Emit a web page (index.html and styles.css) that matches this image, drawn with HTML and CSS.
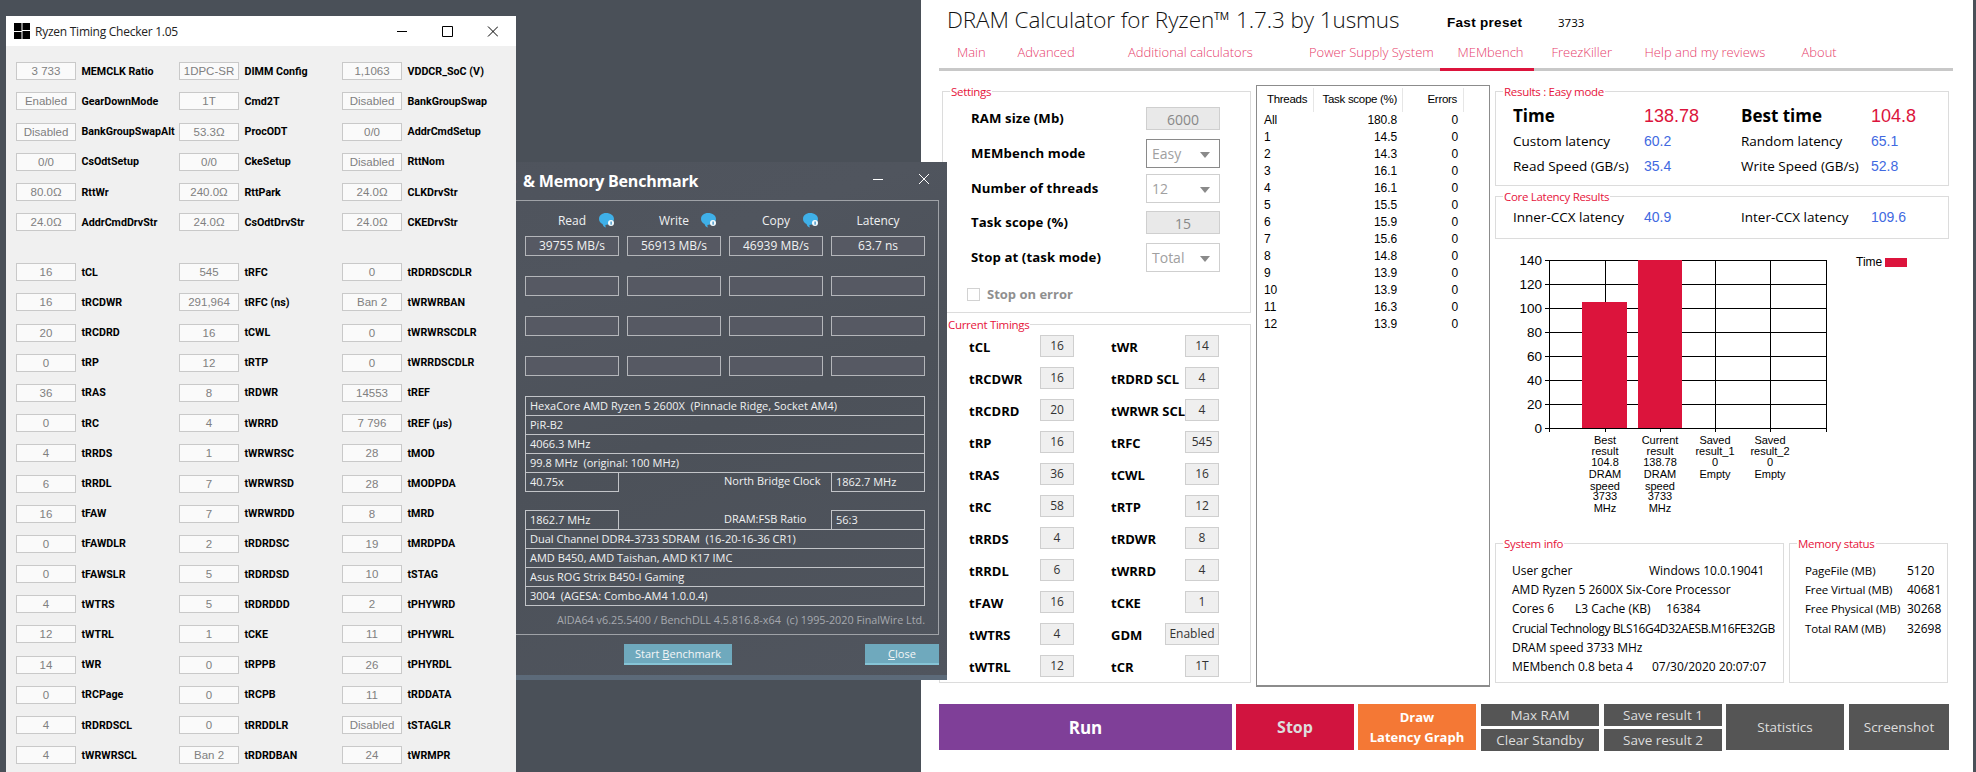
FILE: index.html
```html
<!DOCTYPE html>
<html lang="en">
<head>
<meta charset="utf-8">
<title>Ryzen tools</title>
<link rel="stylesheet" href="styles.css">
</head>
<body>
<div class="desktop">

<section class="dram">
  <header class="dram-head">
    <h1>DRAM Calculator for Ryzen™ 1.7.3 by 1usmus</h1>
    <span class="preset">Fast preset</span>
    <span class="preset-val">3733</span>
  </header>
  <nav class="tabs">
    <span>Main</span><span>Advanced</span><span>Additional calculators</span><span>Power Supply System</span><span class="on">MEMbench</span><span>FreezKiller</span><span>Help and my reviews</span><span>About</span>
  </nav>
  <div class="main">
    <div class="left">
      <div class="group settings">
        <span class="legend">Settings</span>
        <div class="srow"><b>RAM size (Mb)</b><span class="input">6000</span></div>
        <div class="srow g9"><b>MEMbench mode</b><span class="select focus">Easy<i></i></span></div>
        <div class="srow g6"><b>Number of threads</b><span class="select">12<i></i></span></div>
        <div class="srow g8"><b>Task scope (%)</b><span class="input">15</span></div>
        <div class="srow g9"><b>Stop at (task mode)</b><span class="select">Total<i></i></span></div>
        <div class="check"><i></i><b>Stop on error</b></div>
      </div>
      <div class="group timings">
        <span class="legend">Current Timings</span>
        <b>tCL</b><span class="tv">16</span><b>tWR</b><span class="tv">14</span>
        <b>tRCDWR</b><span class="tv">16</span><b>tRDRD SCL</b><span class="tv">4</span>
        <b>tRCDRD</b><span class="tv">20</span><b>tWRWR SCL</b><span class="tv">4</span>
        <b>tRP</b><span class="tv">16</span><b>tRFC</b><span class="tv">545</span>
        <b>tRAS</b><span class="tv">36</span><b>tCWL</b><span class="tv">16</span>
        <b>tRC</b><span class="tv">58</span><b>tRTP</b><span class="tv">12</span>
        <b>tRRDS</b><span class="tv">4</span><b>tRDWR</b><span class="tv">8</span>
        <b>tRRDL</b><span class="tv">6</span><b>tWRRD</b><span class="tv">4</span>
        <b>tFAW</b><span class="tv">16</span><b>tCKE</b><span class="tv">1</span>
        <b>tWTRS</b><span class="tv">4</span><b>GDM</b><span class="tv wide">Enabled</span>
        <b>tWTRL</b><span class="tv">12</span><b>tCR</b><span class="tv">1T</span>
      </div>
    </div>

    <div class="threads">
      <div class="thead"><span>Threads</span><span>Task scope (%)</span><span>Errors</span></div>
      <div class="trow"><span>All</span><span>180.8</span><span>0</span></div>
      <div class="trow"><span>1</span><span>14.5</span><span>0</span></div>
      <div class="trow"><span>2</span><span>14.3</span><span>0</span></div>
      <div class="trow"><span>3</span><span>16.1</span><span>0</span></div>
      <div class="trow"><span>4</span><span>16.1</span><span>0</span></div>
      <div class="trow"><span>5</span><span>15.5</span><span>0</span></div>
      <div class="trow"><span>6</span><span>15.9</span><span>0</span></div>
      <div class="trow"><span>7</span><span>15.6</span><span>0</span></div>
      <div class="trow"><span>8</span><span>14.8</span><span>0</span></div>
      <div class="trow"><span>9</span><span>13.9</span><span>0</span></div>
      <div class="trow"><span>10</span><span>13.9</span><span>0</span></div>
      <div class="trow"><span>11</span><span>16.3</span><span>0</span></div>
      <div class="trow"><span>12</span><span>13.9</span><span>0</span></div>
    </div>

    <div class="right">
      <div class="group results">
        <span class="legend">Results : Easy mode</span>
        <b class="big">Time</b><span class="bigval">138.78</span><b class="big">Best time</b><span class="bigval">104.8</span>
        <span>Custom latency</span><span class="blue">60.2</span><span>Random latency</span><span class="blue">65.1</span>
        <span>Read Speed (GB/s)</span><span class="blue">35.4</span><span>Write Speed (GB/s)</span><span class="blue">52.8</span>
      </div>
      <div class="group core">
        <span class="legend">Core Latency Results</span>
        <span>Inner-CCX latency</span><span class="blue">40.9</span><span>Inter-CCX latency</span><span class="blue">109.6</span>
      </div>
      <svg class="chart" width="454" height="304" viewBox="0 0 454 304">
        <g class="grid">
          <path d="M50 21.5H332M50 45.5H332M50 69.5H332M50 93.5H332M50 117.5H332M50 141.5H332M50 165.5H332M50 189.5H332"/>
          <path d="M54.5 21V193M110.5 21V193M165.5 21V193M220.5 21V193M275.5 21V193M331.5 21V193"/>
        </g>
        <rect class="bar" x="87" y="63" width="45" height="126"/>
        <rect class="bar" x="143" y="21" width="44" height="168"/>
        <g class="ylab">
          <text x="47" y="26">140</text><text x="47" y="50">120</text><text x="47" y="74">100</text><text x="47" y="98">80</text><text x="47" y="122">60</text><text x="47" y="146">40</text><text x="47" y="170">20</text><text x="47" y="194">0</text>
        </g>
        <text class="lgd" x="361" y="27">Time</text>
        <rect class="bar" x="390" y="19" width="22" height="9"/>
        <g class="xlab">
          <text x="110" y="205">Best</text><text x="110" y="216">result</text><text x="110" y="227">104.8</text><text x="110" y="239">DRAM</text><text x="110" y="251">speed</text><text x="110" y="261">3733</text><text x="110" y="273">MHz</text>
          <text x="165" y="205">Current</text><text x="165" y="216">result</text><text x="165" y="227">138.78</text><text x="165" y="239">DRAM</text><text x="165" y="251">speed</text><text x="165" y="261">3733</text><text x="165" y="273">MHz</text>
          <text x="220" y="205">Saved</text><text x="220" y="216">result_1</text><text x="220" y="227">0</text><text x="220" y="239">Empty</text>
          <text x="275" y="205">Saved</text><text x="275" y="216">result_2</text><text x="275" y="227">0</text><text x="275" y="239">Empty</text>
        </g>
      </svg>
      <div class="info-row">
        <div class="group sys">
          <span class="legend">System info</span>
          <div class="line"><span class="w137">User gcher</span><span>Windows 10.0.19041</span></div>
          <div class="line">AMD Ryzen 5 2600X Six-Core Processor</div>
          <div class="line"><span class="w63">Cores 6</span><span class="w91">L3 Cache (KB)</span><span>16384</span></div>
          <div class="line tight">Crucial Technology BLS16G4D32AESB.M16FE32GB</div>
          <div class="line">DRAM speed 3733 MHz</div>
          <div class="line"><span class="w140">MEMbench 0.8 beta 4</span><span>07/30/2020 20:07:07</span></div>
        </div>
        <div class="group mem">
          <span class="legend">Memory status</span>
          <div class="line"><span class="w102">PageFile (MB)</span><span>5120</span></div>
          <div class="line"><span class="w102">Free Virtual (MB)</span><span>40681</span></div>
          <div class="line"><span class="w102">Free Physical (MB)</span><span>30268</span></div>
          <div class="line"><span class="w102">Total RAM (MB)</span><span>32698</span></div>
        </div>
      </div>
    </div>
  </div>
  <div class="actions">
    <button class="run">Run</button>
    <button class="stop">Stop</button>
    <button class="draw">Draw<br>Latency Graph</button>
    <div class="stack"><button class="gray">Max RAM</button><button class="gray">Clear Standby</button></div>
    <div class="stack"><button class="gray">Save result 1</button><button class="gray">Save result 2</button></div>
    <button class="gray tall stat">Statistics</button>
    <button class="gray tall shot">Screenshot</button>
  </div>
</section>

<section class="aida">
  <div class="aida-title">
    <span class="aida-name"><span class="cut">Cache</span> &amp; Memory Benchmark</span>
    <svg class="aida-ctl" width="58" height="12" viewBox="0 0 58 12"><path d="M2 6.500H12M48 1L58 11M58 1L48 11"/></svg>
  </div>
  <div class="frame">
    <div class="cols heads">
      <span>Read<svg class="bubble" width="16" height="15" viewBox="0 0 16 15"><path d="M7 0C3 0 0 2.500 0 6c0 2.500 1.500 4 3.500 5 .3 1.500 1.500 3 3.500 3.500-.5-1-.7-1.800-.6-2.600L11 11c2.500-1 4-3 4-5 0-3.500-3.500-6-8-6z"/><circle cx="12" cy="10" r="3"/><rect x="11.500" y="8.500" width="1.200" height="3.200"/></svg></span>
      <span>Write<svg class="bubble" width="16" height="15" viewBox="0 0 16 15"><path d="M7 0C3 0 0 2.500 0 6c0 2.500 1.500 4 3.500 5 .3 1.500 1.500 3 3.500 3.500-.5-1-.7-1.800-.6-2.600L11 11c2.500-1 4-3 4-5 0-3.500-3.500-6-8-6z"/><circle cx="12" cy="10" r="3"/><rect x="11.500" y="8.500" width="1.200" height="3.200"/></svg></span>
      <span>Copy<svg class="bubble" width="16" height="15" viewBox="0 0 16 15"><path d="M7 0C3 0 0 2.500 0 6c0 2.500 1.500 4 3.500 5 .3 1.500 1.500 3 3.500 3.500-.5-1-.7-1.800-.6-2.600L11 11c2.500-1 4-3 4-5 0-3.500-3.500-6-8-6z"/><circle cx="12" cy="10" r="3"/><rect x="11.500" y="8.500" width="1.200" height="3.200"/></svg></span>
      <span>Latency</span>
    </div>
    <div class="cols vals"><span>39755 MB/s</span><span>56913 MB/s</span><span>46939 MB/s</span><span>63.7 ns</span></div>
    <div class="cols vals"><span></span><span></span><span></span><span></span></div>
    <div class="cols vals"><span></span><span></span><span></span><span></span></div>
    <div class="cols vals"><span></span><span></span><span></span><span></span></div>
    <div class="tbl first">
      <div class="cell">HexaCore AMD Ryzen 5 2600X &nbsp;(Pinnacle Ridge, Socket AM4)</div>
      <div class="cell">PiR-B2</div>
      <div class="cell">4066.3 MHz</div>
      <div class="cell">99.8 MHz &nbsp;(original: 100 MHz)</div>
      <div class="split"><div class="cell">40.75x</div><span class="mid">North Bridge Clock</span><div class="cell">1862.7 MHz</div></div>
    </div>
    <div class="tbl second">
      <div class="split"><div class="cell">1862.7 MHz</div><span class="mid">DRAM:FSB Ratio</span><div class="cell">56:3</div></div>
      <div class="cell">Dual Channel DDR4-3733 SDRAM &nbsp;(16-20-16-36 CR1)</div>
      <div class="cell">AMD B450, AMD Taishan, AMD K17 IMC</div>
      <div class="cell">Asus ROG Strix B450-I Gaming</div>
      <div class="cell">3004 &nbsp;(AGESA: Combo-AM4 1.0.0.4)</div>
    </div>
    <p class="copy">AIDA64 v6.25.5400 / BenchDLL 4.5.816.8-x64 &nbsp;(c) 1995-2020 FinalWire Ltd.</p>
  </div>
  <div class="aida-btns">
    <button class="tealb start">Start <u>B</u>enchmark</button>
    <button class="tealb close"><u>C</u>lose</button>
  </div>
</section>

<section class="rtc">
  <header class="rtc-title">
    <svg class="rtc-icon" width="16" height="16" viewBox="0 0 16 16"><path d="M0 0h7.500v8H0zM8.500 0H16v7H8.500zM0 9h7.500v7H0zM8.500 8H16v8H8.500z"/></svg>
    <span class="rtc-name">Ryzen Timing Checker 1.05</span>
    <svg class="rtc-ctl" width="101" height="11" viewBox="0 0 101 11"><path d="M0 5.500H10M45.500 .5H55.500V10.500H45.500ZM91 .5L101 10.500M101 .5L91 10.500"/></svg>
  </header>
  <div class="rtc-body">
    <div class="rgrid">
      <div class="rc"><span>3 733</span><b>MEMCLK Ratio</b></div><div class="rc"><span>1DPC-SR</span><b>DIMM Config</b></div><div class="rc"><span>1,1063</span><b>VDDCR_SoC (V)</b></div>
      <div class="rc"><span>Enabled</span><b>GearDownMode</b></div><div class="rc"><span>1T</span><b>Cmd2T</b></div><div class="rc"><span>Disabled</span><b>BankGroupSwap</b></div>
      <div class="rc"><span>Disabled</span><b>BankGroupSwapAlt</b></div><div class="rc"><span>53.3Ω</span><b>ProcODT</b></div><div class="rc"><span>0/0</span><b>AddrCmdSetup</b></div>
      <div class="rc"><span>0/0</span><b>CsOdtSetup</b></div><div class="rc"><span>0/0</span><b>CkeSetup</b></div><div class="rc"><span>Disabled</span><b>RttNom</b></div>
      <div class="rc"><span>80.0Ω</span><b>RttWr</b></div><div class="rc"><span>240.0Ω</span><b>RttPark</b></div><div class="rc"><span>24.0Ω</span><b>CLKDrvStr</b></div>
      <div class="rc"><span>24.0Ω</span><b>AddrCmdDrvStr</b></div><div class="rc"><span>24.0Ω</span><b>CsOdtDrvStr</b></div><div class="rc"><span>24.0Ω</span><b>CKEDrvStr</b></div>
    </div>
    <div class="rgrid lower">
      <div class="rc"><span>16</span><b>tCL</b></div><div class="rc"><span>545</span><b>tRFC</b></div><div class="rc"><span>0</span><b>tRDRDSCDLR</b></div>
      <div class="rc"><span>16</span><b>tRCDWR</b></div><div class="rc"><span>291,964</span><b>tRFC (ns)</b></div><div class="rc"><span>Ban 2</span><b>tWRWRBAN</b></div>
      <div class="rc"><span>20</span><b>tRCDRD</b></div><div class="rc"><span>16</span><b>tCWL</b></div><div class="rc"><span>0</span><b>tWRWRSCDLR</b></div>
      <div class="rc"><span>0</span><b>tRP</b></div><div class="rc"><span>12</span><b>tRTP</b></div><div class="rc"><span>0</span><b>tWRRDSCDLR</b></div>
      <div class="rc"><span>36</span><b>tRAS</b></div><div class="rc"><span>8</span><b>tRDWR</b></div><div class="rc"><span>14553</span><b>tREF</b></div>
      <div class="rc"><span>0</span><b>tRC</b></div><div class="rc"><span>4</span><b>tWRRD</b></div><div class="rc"><span>7 796</span><b>tREF (µs)</b></div>
      <div class="rc"><span>4</span><b>tRRDS</b></div><div class="rc"><span>1</span><b>tWRWRSC</b></div><div class="rc"><span>28</span><b>tMOD</b></div>
      <div class="rc"><span>6</span><b>tRRDL</b></div><div class="rc"><span>7</span><b>tWRWRSD</b></div><div class="rc"><span>28</span><b>tMODPDA</b></div>
      <div class="rc"><span>16</span><b>tFAW</b></div><div class="rc"><span>7</span><b>tWRWRDD</b></div><div class="rc"><span>8</span><b>tMRD</b></div>
      <div class="rc"><span>0</span><b>tFAWDLR</b></div><div class="rc"><span>2</span><b>tRDRDSC</b></div><div class="rc"><span>19</span><b>tMRDPDA</b></div>
      <div class="rc"><span>0</span><b>tFAWSLR</b></div><div class="rc"><span>5</span><b>tRDRDSD</b></div><div class="rc"><span>10</span><b>tSTAG</b></div>
      <div class="rc"><span>4</span><b>tWTRS</b></div><div class="rc"><span>5</span><b>tRDRDDD</b></div><div class="rc"><span>2</span><b>tPHYWRD</b></div>
      <div class="rc"><span>12</span><b>tWTRL</b></div><div class="rc"><span>1</span><b>tCKE</b></div><div class="rc"><span>11</span><b>tPHYWRL</b></div>
      <div class="rc"><span>14</span><b>tWR</b></div><div class="rc"><span>0</span><b>tRPPB</b></div><div class="rc"><span>26</span><b>tPHYRDL</b></div>
      <div class="rc"><span>0</span><b>tRCPage</b></div><div class="rc"><span>0</span><b>tRCPB</b></div><div class="rc"><span>11</span><b>tRDDATA</b></div>
      <div class="rc"><span>4</span><b>tRDRDSCL</b></div><div class="rc"><span>0</span><b>tRRDDLR</b></div><div class="rc"><span>Disabled</span><b>tSTAGLR</b></div>
      <div class="rc"><span>4</span><b>tWRWRSCL</b></div><div class="rc"><span>Ban 2</span><b>tRDRDBAN</b></div><div class="rc"><span>24</span><b>tWRMPR</b></div>
    </div>
  </div>
</section>

</div>
</body>
</html>
```
FILE: styles.css
```css
* { box-sizing: border-box; }
html, body { margin: 0; height: 100%; }
body { overflow: hidden; background: #4a5058; font-family: "Open Sans", "Liberation Sans", sans-serif; }
button { border: 0; padding: 0; font-family: inherit; }
.desktop { position: relative; width: 1976px; height: 772px; overflow: hidden; background: #4a5058; }

/* Ryzen Timing Checker window */
.rtc { position: absolute; left: 6px; top: 16px; width: 510px; height: 780px; background: #f0f0f0; z-index: 3; }
.rtc-title { height: 30px; background: #fff; display: flex; align-items: center; padding-left: 8px; }
.rtc-icon { fill: #000; flex: none; }
.rtc-name { margin-left: 5px; font: 12px "Open Sans", sans-serif; color: #222; letter-spacing: -.25px; }
.rtc-ctl { margin-left: auto; margin-right: 18px; fill: none; stroke: #000; stroke-width: 1; }
.rtc-body { padding: 16.300px 0 0 10px; }
.rgrid { display: grid; grid-template-columns: repeat(3, 163px); grid-auto-rows: 18px; row-gap: 12.200px; }
.rgrid.lower { margin-top: 32px; }
.rc { display: flex; align-items: center; }
.rc span { flex: none; width: 60px; height: 18px; border: 1px solid #c9c9c9; background: #fafafa; color: #808080; font: 11.500px/16px "Liberation Sans", sans-serif; text-align: center; }
.rc b { margin-left: 5.500px; font: 700 10.700px Roboto, sans-serif; color: #000; white-space: nowrap; }

/* AIDA64 window */
.aida { position: absolute; left: 300px; top: 162px; width: 647px; height: 518px; z-index: 2; color: #f0f1f2;
  background: linear-gradient(160deg, #4e535c 0%, #50555e 30%, #4c5159 55%, #50555e 100%); border-bottom: 5px solid #5c6a79; }
.aida-title { height: 38px; display: flex; align-items: center; padding-left: 169px; }
.aida-name { font: 700 16px "Open Sans", sans-serif; color: #fff; white-space: nowrap; letter-spacing: -.2px; }
.cut { margin-right: 3px; }
.aida-ctl { margin-left: auto; margin-right: 18px; margin-top: -5px; fill: none; stroke: #fff; stroke-width: 1; }
.frame { margin-right: 8px; height: 435px; border: 1px solid #9fa2a7; padding: 0 13px 0 224px; }
.cols { display: grid; grid-template-columns: repeat(4, 94px); column-gap: 8px; }
.heads { height: 35px; padding-top: 10px; font-size: 12px; line-height: 20px; text-align: center; }
.heads span { position: relative; display: block; }
.bubble { position: absolute; right: 4px; top: 2px; }
.bubble path { fill: #3fb0e8; }
.bubble circle { fill: #f2fafd; }
.bubble rect { fill: #2a86c0; }
.vals { margin-bottom: 20px; }
.vals span { height: 20px; background: #565963; border: 1px solid #b4b6ba; text-align: center; font-size: 12px; line-height: 17px; }
.tbl { font-size: 11px; line-height: 17px; }
.cell { height: 20px; margin-bottom: -1px; border: 1px solid #c2c4c8; padding-left: 4px; white-space: nowrap; }
.split { display: flex; height: 20px; margin-bottom: -1px; }
.split .cell { flex: none; width: 94px; margin: 0; }
.split .mid { flex: 1; padding-left: 105px; }
.second { margin-top: 19px; }
.copy { margin: 6px 0 0; font-size: 10.800px; line-height: 17px; text-align: right; color: #a6a9af; white-space: nowrap; }
.aida-btns { display: flex; justify-content: flex-end; gap: 133px; margin: 9px 8px 0 0; }
.tealb { height: 21px; background: #6fa9bd; border-bottom: 2px solid #86c4d6; color: #f4f6f7; font-size: 11px; }
.start { width: 108px; }
.close { width: 74px; }

/* DRAM Calculator window */
.dram { position: absolute; left: 921px; top: 0; width: 1052px; height: 772px; background: #fff; padding-left: 18px; z-index: 1; color: #000; }
.dram-head { height: 39px; display: flex; align-items: center; padding-left: 8px; }
.dram-head h1 { margin: 0; width: 500px; font: 300 22.500px "Open Sans", sans-serif; color: #111; white-space: nowrap; letter-spacing: -.1px; }
.preset { width: 111px; font: 700 13.500px "Liberation Sans", sans-serif; letter-spacing: .3px; padding-top: 5px; }
.preset-val { font-size: 11.500px; padding-top: 5px; }
.tabs { display: grid; grid-template-columns: 60.500px 110.500px 181px 148.500px 94px 93px 157px 151px; width: 1014px; height: 32px; border-bottom: 3px solid #c8c8c8; color: #e6406c; font-weight: 300; font-size: 13px; line-height: 26px; }
.tabs span { padding-left: 18px; white-space: nowrap; height: 32px; }
.tabs .on { border-bottom: 3px solid #dc143c; }
.main { display: grid; grid-template-columns: 312px 234px 454px; column-gap: 5px; margin-top: 14px; height: 616px; }
.group { position: relative; border: 1px solid #dcdcdc; }
.legend { position: absolute; left: 7px; top: -8px; padding: 0 1px; background: #fff; color: #e6143c; font-size: 11.500px; line-height: 15px; letter-spacing: -.3px; white-space: nowrap; }
.left { padding-top: 6px; }
.settings { margin-left: 3px; height: 222px; padding: 15px 0 0 28px; }
.srow { display: flex; align-items: center; font-size: 13.200px; }
.srow b { width: 175px; letter-spacing: .1px; margin-top: -2px; }
.g6 { margin-top: 6px; }
.g8 { margin-top: 8px; }
.g9 { margin-top: 9px; }
.input { width: 74px; height: 23px; background: #e9e9e9; border: 1px solid #cfcfcf; color: #888; font-size: 14px; line-height: 23px; text-align: center; }
.select { position: relative; width: 74px; height: 29px; border: 1px solid #cfcfcf; color: #a0a0a0; font-size: 14px; line-height: 28px; padding-left: 5px; }
.select.focus { border-color: #8a8a8a; }
.select i { position: absolute; right: 9px; top: 12px; border: 5px solid transparent; border-top: 6px solid #8a8a8a; border-bottom: 0; }
.check { display: flex; align-items: center; margin: 13px 0 0 -4px; color: #8f8f8f; font-size: 13px; }
.check i { width: 13px; height: 13px; border: 1px solid #d2d2d2; margin-right: 7px; }
.timings { margin-top: 11px; height: 359px; padding: 10px 0 0 29px; display: grid; grid-template-columns: 71px 34px 111px 34px; grid-auto-rows: 22px; row-gap: 10px; font-size: 13px; }
.timings b { line-height: 25px; white-space: nowrap; }
.timings b:nth-of-type(2n) { margin-left: 37px; }
.tv { width: 34px; height: 22px; background: #efefef; border: 1px solid #cfcfcf; color: #333; font-size: 12px; line-height: 19px; text-align: center; }
.tv.wide { width: 54px; margin-left: -20px; }
.threads { border: 1px solid #8c8c8c; border-width: 1px 1px 2px 1px; height: 602px; font-size: 12px; font-family: "Liberation Sans", sans-serif; letter-spacing: -.1px; }
.thead { display: grid; grid-template-columns: 56.500px 89.500px 61px; height: 24px; margin-top: 2px; line-height: 22px; font-size: 11.500px; letter-spacing: -.3px; }
.thead span { border-right: 1px solid #e6e6e6; white-space: nowrap; }
.thead span:nth-child(1) { padding-left: 10px; }
.thead span:nth-child(2), .thead span:nth-child(3) { text-align: right; padding-right: 5px; }
.thead span:nth-child(3) { padding-right: 6px; }
.trow { display: grid; grid-template-columns: 50px 83px 61px; height: 17px; line-height: 17px; padding-left: 7px; }
.trow span { white-space: nowrap; }
.trow span:not(:first-child) { text-align: right; }
.results, .core { display: grid; grid-template-columns: 131px 97px 130px 70px; align-items: center; padding-left: 17px; font-size: 13.500px; white-space: nowrap; }
.right { padding-top: 6px; }
.results { height: 95px; padding-top: 11px; grid-auto-rows: 25px; align-content: start; }
.core { margin-top: 10px; height: 43px; padding-top: 11px; align-content: start; }
.big { font-size: 17px; line-height: 22px; }
.bigval { color: #dc143c; font: 18px/22px "Liberation Sans", sans-serif; }
.blue { color: #4169e1; font: 14px/18px "Liberation Sans", sans-serif; }
.chart { display: block; }
.grid { fill: none; stroke: #000; stroke-width: 1; shape-rendering: crispEdges; }
.bar { fill: #dc143c; }
.ylab text { text-anchor: end; font: 13.500px "Liberation Sans", sans-serif; }
.lgd { font: 12px "Liberation Sans", sans-serif; }
.xlab text { text-anchor: middle; font: 11px "Liberation Sans", sans-serif; }
.info-row { display: flex; gap: 5px; }
.info-row .line { display: flex; height: 19.200px; line-height: 19px; font-size: 12px; white-space: nowrap; }
.info-row .tight { letter-spacing: -.4px; }
.sys { width: 289px; height: 140px; padding: 17px 0 0 16px; }
.mem { width: 159px; height: 140px; padding: 17px 0 0 15px; }
.mem .line span:first-child { font-size: 11.500px; letter-spacing: -.1px; }
.w137 { width: 137px; }
.w63 { width: 63px; }
.w91 { width: 91px; }
.w140 { width: 140px; }
.w102 { width: 102px; flex: none; }
.actions { display: flex; margin-top: 3px; height: 47px; }
.actions button { color: #fff; }
.run { width: 293px; height: 46px; background: #7f3f98; font-weight: 700; font-size: 17px; }
.stop { width: 118px; height: 46px; margin-left: 4px; background: #d1143f; color: #ddd !important; font-weight: 700; font-size: 16px; }
.draw { width: 118px; height: 46px; margin-left: 4px; background: #f47835; font-weight: 700; font-size: 13px; line-height: 20px; }
.stack { display: flex; flex-direction: column; gap: 3px; width: 118px; margin-left: 5px; }
.gray { display: block; background: #555; color: #ddd !important; font-size: 13.500px; width: 118px; height: 22px; }
.tall { height: 46px; }
.stat { margin-left: 4px; }
.shot { margin-left: 5px; width: 100px; }
```
